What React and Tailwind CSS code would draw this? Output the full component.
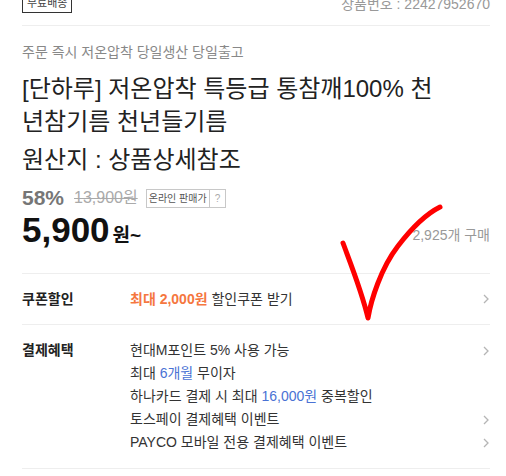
const Chevron = () => (
    <svg width="8" height="12" viewBox="0 0 8 12" className="shrink-0">
        <path d="M2 2l4 4-4 4" fill="none" stroke="#b5b5b5" strokeWidth="1.3" />
    </svg>
)

const BenefitRow = ({ children, arrow }) => (
    <div className="flex items-center justify-between h-[23px]">
        <span>{children}</span>
        {arrow && <Chevron />}
    </div>
)

export default function App() {
    return (
        <div
            className="relative w-[506px] h-[476px] overflow-hidden bg-white pl-[22px] pr-[16px] text-[#222]"
            style={{ fontFamily: '"Liberation Sans", "Noto Sans CJK KR", sans-serif' }}
        >
            {/* 상단 배지 / 상품번호 */}
            <div className="flex items-end justify-between -mt-[6px] h-[19px]">
                <span className="border border-[#333] px-[4px] text-[11px] leading-[17px] text-[#444]">무료배송</span>
                <span className="text-[14px] leading-[17px] text-[#999]">상품번호 : 22427952670</span>
            </div>
            <div className="mt-[12px] border-t border-[#eee]" />

            <p className="mt-[16px] text-[14px] leading-[20px] text-[#888]">주문 즉시 저온압착 당일생산 당일출고</p>
            <h1 className="mt-[10px] text-[24px] leading-[33px] text-[#222]">
                [단하루] 저온압착 특등급 통참깨100% 천<br />년참기름 천년들기름
            </h1>
            <p className="mt-[5px] text-[24px] leading-[33px] text-[#222]">원산지 : 상품상세참조</p>

            {/* 가격 */}
            <div className="mt-[10px] flex items-center h-[24px]">
                <span className="text-[21px] font-bold text-[#767676]">58%</span>
                <span className="ml-[10px] text-[16px] text-[#aaa] line-through">13,900원</span>
                <span className="ml-[8px] flex border border-[#c8c8c8] text-[10px] leading-[17px] text-[#555]">
                    <span className="px-[2px]">온라인 판매가</span>
                    <span className="border-l border-[#c8c8c8] px-[5px] text-[#aaa]">?</span>
                </span>
            </div>
            <div className="mt-[4px] flex items-end justify-between h-[36px]">
                <div className="flex items-baseline">
                    <span className="text-[35px] font-bold leading-[36px] text-[#111]">5,900</span>
                    <span className="ml-[3px] text-[19px] font-bold text-[#111]">원~</span>
                </div>
                <span className="mb-[4px] text-[14px] text-[#999]">2,925개 구매</span>
            </div>

            <div className="mt-[23px] border-t border-[#eee]" />
            <div className="flex items-center h-[50px] text-[14px]">
                <span className="w-[108px] font-bold">쿠폰할인</span>
                <span className="flex-1">
                    <b className="text-[#f5773f]">최대 2,000원</b> <span className="text-[#333]">할인쿠폰 받기</span>
                </span>
                <Chevron />
            </div>
            <div className="border-t border-[#eee]" />

            <div className="flex pt-[14px] pb-[14px] text-[14px]">
                <span className="w-[108px] font-bold leading-[23px]">결제혜택</span>
                <div className="flex-1 text-[#333]">
                    <BenefitRow arrow>현대M포인트 5% 사용 가능</BenefitRow>
                    <BenefitRow>
                        최대 <span className="text-[#4a72d4]">6개월</span> 무이자
                    </BenefitRow>
                    <BenefitRow>
                        하나카드 결제 시 최대 <span className="text-[#4a72d4]">16,000원</span> 중복할인
                    </BenefitRow>
                    <BenefitRow arrow>토스페이 결제혜택 이벤트</BenefitRow>
                    <BenefitRow arrow>PAYCO 모바일 전용 결제혜택 이벤트</BenefitRow>
                </div>
            </div>
            <div className="border-t border-[#eee]" />

            {/* 손글씨 체크 */}
            <svg className="pointer-events-none absolute left-0 top-0" width="506" height="476">
                <path
                    d="M343 243 C350 262 362 292 368 318 C371 300 381 268 398 246 C411 229 426 214 440 207"
                    fill="none"
                    stroke="#ff0000"
                    strokeWidth="5"
                    strokeLinecap="round"
                    strokeLinejoin="round"
                />
            </svg>
        </div>
    )
}
